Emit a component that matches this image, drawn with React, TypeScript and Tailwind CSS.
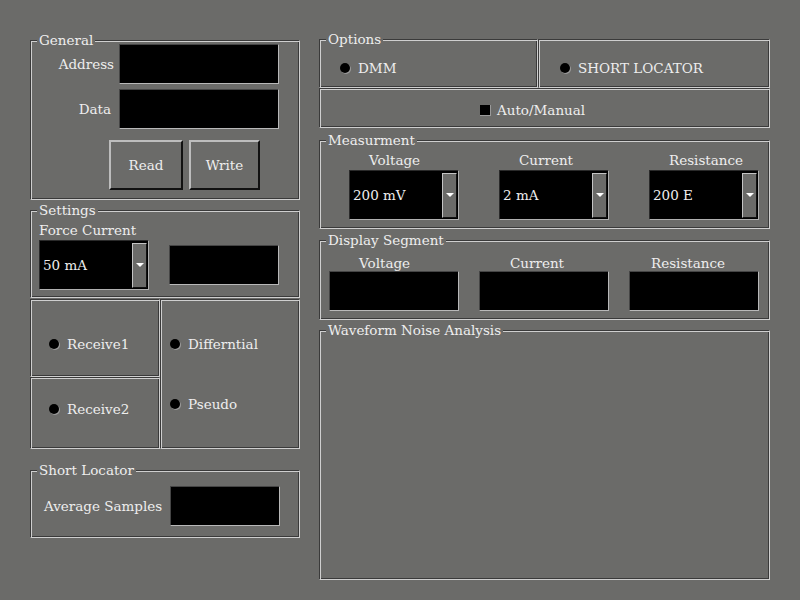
const groove =
  "border border-t-[#3a3a3a] border-l-[#3a3a3a] border-b-[#cfcfcf] border-r-[#cfcfcf] shadow-[inset_1px_1px_0_#cfcfcf,inset_-1px_-1px_0_#3a3a3a]";

const Frame = ({
  title,
  className,
  children,
}: {
  title?: string;
  className?: string;
  children?: React.ReactNode;
}) => (
  <div className={`relative ${groove} ${className ?? ""}`}>
    {title && (
      <span className="absolute -top-[9px] left-[6px] bg-[#6b6b69] px-[2px] leading-[16px] whitespace-nowrap">
        {title}
      </span>
    )}
    {children}
  </div>
);

const Entry = ({ className }: { className?: string }) => (
  <div
    className={`shrink-0 bg-black border border-t-[#454545] border-l-[#454545] border-b-[#b8b8b8] border-r-[#b8b8b8] ${className ?? ""}`}
  />
);

const Combo = ({ value, className }: { value: string; className?: string }) => (
  <div
    className={`shrink-0 flex items-center w-[110px] h-[50px] bg-black border border-t-[#2a2a2a] border-l-[#2a2a2a] border-b-[#b0b0b0] border-r-[#b0b0b0] ${className ?? ""}`}
  >
    <span className="flex-1 pl-[3px] leading-[16px]">{value}</span>
    <div className="flex items-center justify-center w-[15px] h-[45px] mr-[1px] bg-[#6b6b69] border border-t-[#c4c4c4] border-l-[#c4c4c4] border-b-[#111] border-r-[#111]">
      <div className="w-0 h-0 border-x-[4px] border-x-transparent border-t-[4px] border-t-white" />
    </div>
  </div>
);

const Radio = ({ label }: { label: string }) => (
  <div className="flex items-center h-[16px] leading-[16px]">
    <span className="w-[10px] h-[10px] rounded-full bg-black shadow-[1px_1px_0_#9a9a9a]" />
    <span className="ml-[8px] whitespace-nowrap">{label}</span>
  </div>
);

const Button = ({ label, className }: { label: string; className?: string }) => (
  <button
    className={`h-[50px] bg-[#6b6b69] border-2 border-t-[#bdbdbd] border-l-[#bdbdbd] border-b-[#111] border-r-[#111] text-[#eeeeee] ${className ?? ""}`}
  >
    {label}
  </button>
);

export default function App() {
  return (
    <div className="w-[800px] h-[600px] bg-[#6b6b69] text-[#eeeeee] text-[13.5px] font-[DejaVu_Serif,serif] flex pl-[30px] pt-[39px] gap-[19px] overflow-hidden">
      {/* LEFT COLUMN */}
      <div className="flex flex-col w-[270px] shrink-0 pt-[1px]">
        {/* GENERAL */}
        <Frame title="General" className="h-[160px] pt-[3px]">
          <div className="flex items-center">
            <span className="w-[88px] text-right pr-[5px] leading-[16px]">Address</span>
            <Entry className="w-[160px] h-[40px]" />
          </div>
          <div className="flex items-center mt-[5px]">
            <span className="w-[88px] text-right pr-[8px] leading-[16px]">Data</span>
            <Entry className="w-[160px] h-[40px]" />
          </div>
          <div className="flex gap-[6px] mt-[11px] pl-[78px]">
            <Button label="Read" className="w-[74px]" />
            <Button label="Write" className="w-[71px]" />
          </div>
        </Frame>

        {/* SETTINGS */}
        <Frame title="Settings" className="h-[88px] mt-[10px] pt-[11px] pl-[8px]">
          <div className="leading-[16px]">Force Current</div>
          <div className="flex items-center gap-[20px] mt-[2px]">
            <Combo value="50 mA" />
            <Entry className="w-[110px] h-[40px]" />
          </div>
        </Frame>

        {/* RECEIVE GRID */}
        <div className="flex mt-[1px]">
          <div className="flex flex-col w-[130px]">
            <div className={`${groove} h-[78px] pt-[36px] pl-[18px]`}>
              <Radio label="Receive1" />
            </div>
            <div className={`${groove} h-[72px] pt-[23px] pl-[18px]`}>
              <Radio label="Receive2" />
            </div>
          </div>
          <div className={`${groove} w-[140px] h-[150px] pt-[36px] pl-[9px]`}>
            <Radio label="Differntial" />
            <div className="mt-[44px]">
              <Radio label="Pseudo" />
            </div>
          </div>
        </div>

        {/* SHORT LOCATOR */}
        <Frame title="Short Locator" className="h-[68px] mt-[21px] pt-[15px] pl-[13px]">
          <div className="flex items-center">
            <span className="w-[126px] leading-[16px] whitespace-nowrap">Average Samples</span>
            <Entry className="w-[110px] h-[40px]" />
          </div>
        </Frame>
      </div>

      {/* RIGHT COLUMN */}
      <div className="flex flex-col w-[451px] shrink-0">
        {/* OPTIONS */}
        <div className="flex h-[49px]">
          <Frame title="Options" className="w-[219px] pt-[20px] pl-[20px]">
            <Radio label="DMM" />
          </Frame>
          <div className={`${groove} flex-1 pt-[20px] pl-[21px]`}>
            <Radio label="SHORT LOCATOR" />
          </div>
        </div>
        <div className={`${groove} h-[40px] pt-[13px] pl-[160px]`}>
          <div className="flex items-center h-[16px] leading-[16px]">
            <span className="w-[11px] h-[11px] bg-black border-r border-b border-r-[#9a9a9a] border-b-[#9a9a9a]" />
            <span className="ml-[6px]">Auto/Manual</span>
          </div>
        </div>

        {/* MEASURMENT */}
        <Frame title="Measurment" className="h-[89px] mt-[12px] pt-[11px] pl-[29px]">
          <div className="flex">
            {[
              ["Voltage", "200 mV"],
              ["Current", "2 mA"],
              ["Resistance", "200 E"],
            ].map(([label, value]) => (
              <div key={label} className="w-[150px] shrink-0">
                <div className="pl-[20px] leading-[16px] whitespace-nowrap">{label}</div>
                <Combo value={value} className="mt-[2px]" />
              </div>
            ))}
          </div>
        </Frame>

        {/* DISPLAY SEGMENT */}
        <Frame title="Display Segment" className="h-[80px] mt-[11px] pt-[14px] pl-[9px]">
          <div className="flex">
            <div className="w-[150px] shrink-0">
              <div className="pl-[30px] leading-[16px]">Voltage</div>
              <Entry className="w-[130px] h-[40px]" />
            </div>
            <div className="w-[150px] shrink-0">
              <div className="pl-[31px] leading-[16px]">Current</div>
              <Entry className="w-[130px] h-[40px]" />
            </div>
            <div className="w-[130px] shrink-0">
              <div className="pl-[22px] leading-[16px]">Resistance</div>
              <Entry className="w-[130px] h-[40px]" />
            </div>
          </div>
        </Frame>

        {/* WAVEFORM */}
        <Frame title="Waveform Noise Analysis" className="h-[250px] mt-[10px]" />
      </div>
    </div>
  );
}
